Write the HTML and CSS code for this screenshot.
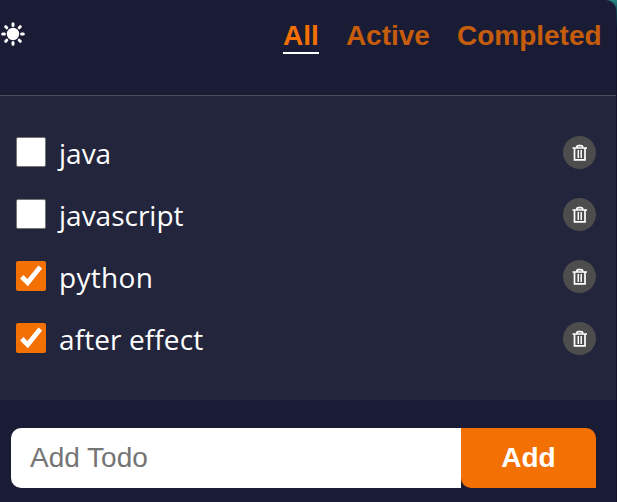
FILE: index.html
```html
<!DOCTYPE html>
<html lang="en">
<head>
<meta charset="utf-8">
<title>Todo</title>
<link rel="stylesheet" href="styles.css">
</head>
<body>
<svg width="0" height="0" class="defs">
  <symbol id="trash" viewBox="0 0 16 18">
    <path d="M2.500 4v11.900h10.500V4M.5 4h14.500M4.600 3.300q.4-1.700 1.900-1.700h2.500q1.500 0 1.900 1.700" fill="none" stroke="#fff" stroke-width="1.700"/>
    <path d="M6.300 6v8M9.200 6v8" stroke="#fff" stroke-width="1.500"/>
  </symbol>
  <symbol id="check" viewBox="0 0 30 30">
    <path d="M5.800 15.700l5.900 5.900L24.300 6" fill="none" stroke="#fff" stroke-width="4.800"/>
  </symbol>
</svg>
<main class="app">
  <header class="header">
    <svg class="sun" viewBox="0 0 24 24">
      <circle cx="12" cy="12" r="6.200" fill="#fff"/>
      <path d="M12 1.700v1.700M12 20.600v1.700M1.700 12h1.700M20.600 12h1.700M4.700 4.700l1.100 1.100M18.200 18.200l1.100 1.100M4.700 19.300l1.100-1.100M18.200 5.800l1.100-1.100" stroke="#fff" stroke-width="3" stroke-linecap="round"/>
    </svg>
    <nav class="filters">
      <a class="filter selected">All</a>
      <a class="filter">Active</a>
      <a class="filter">Completed</a>
    </nav>
  </header>
  <ul class="list">
    <li class="todo"><span class="box"></span><span class="label java">java</span><button class="delete"><svg><use href="#trash"/></svg></button></li>
    <li class="todo"><span class="box"></span><span class="label javascript">javascript</span><button class="delete"><svg><use href="#trash"/></svg></button></li>
    <li class="todo"><span class="box checked"><svg><use href="#check"/></svg></span><span class="label python">python</span><button class="delete"><svg><use href="#trash"/></svg></button></li>
    <li class="todo"><span class="box checked"><svg><use href="#check"/></svg></span><span class="label effect">after effect</span><button class="delete"><svg><use href="#trash"/></svg></button></li>
  </ul>
  <form class="form">
    <input class="input" type="text" placeholder="Add Todo">
    <button class="add" type="button">Add</button>
  </form>
</main>
</body>
</html>
```
FILE: styles.css
```css
* { box-sizing: border-box; margin: 0; padding: 0; }
body { background: linear-gradient(#2a8585 0, #123a48 12px, #12122b 30px); overflow: hidden; }
.defs { display: block; height: 0; }
.app { width: 616px; height: 502px; background: #1a1c35; border-top-right-radius: 10px; overflow: hidden; }
.header { height: 96px; display: flex; justify-content: space-between; align-items: flex-start; padding: 19px 14.4px 0 0; border-bottom: 1px solid #4c4d5a; }
.sun { width: 24px; height: 24px; margin: 3px 0 0 1px; }
.filters { display: flex; gap: 27px; font: bold 28px/33px "Liberation Sans", Arial, sans-serif; }
.filter { height: 35px; color: #c65d0c; }
.selected { color: #f37003; border-bottom: 2px solid #fff; }
.list { height: 304px; padding: 26px 20px 0 16px; background: #23253c; list-style: none; }
.todo { height: 62px; display: flex; align-items: center; }
.box { width: 30px; height: 30px; margin: -2px 13px 0 0; flex: none; background: #fff; border: 1px solid #767676; border-radius: 2px; }
.checked { background: #f37003; border: 0; }
.box svg { display: block; width: 30px; height: 30px; }
.label { flex: 1; color: #fff; font: 28px/40px "Open Sans", "Noto Sans", sans-serif; }
.python { letter-spacing: .3px; }
.effect { letter-spacing: .1px; }
.delete { width: 33px; height: 33px; margin-top: -1px; border: 0; border-radius: 50%; background: #4d4d4d; display: flex; align-items: center; justify-content: center; }
.delete svg { width: 16px; height: 18px; }
.form { display: flex; padding: 28px 20px 0 11px; }
.input { width: 450px; height: 60px; padding: 0 19px; border: 0; border-radius: 10px 0 0 10px; font: 28px "Liberation Sans", Arial, sans-serif; }
.input::placeholder { color: #757575; }
.add { width: 135px; height: 60px; border: 0; border-radius: 0 10px 0 10px; background: #f37003; color: #fff; font: bold 28px "Liberation Sans", Arial, sans-serif; }
```
